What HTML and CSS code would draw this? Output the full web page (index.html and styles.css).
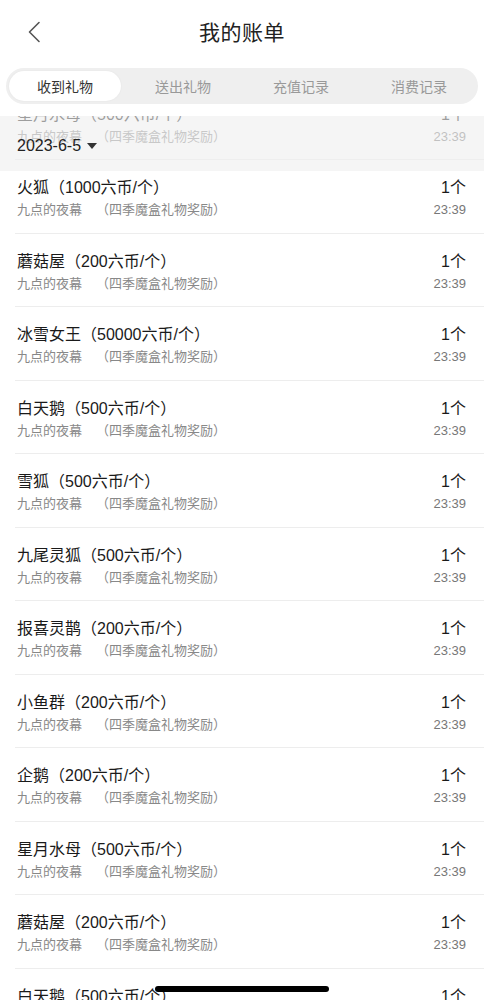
FILE: index.html
```html
<!DOCTYPE html>
<html>
<head lang="zh">
    <meta charset="UTF-8">
    <title>我的账单</title>
    <link rel="stylesheet" href="styles.css">
</head>
<body>

<div class="page">
    <div class="nav">
        <span class="back">
            <svg width="14" height="22" viewBox="0 0 14 22"><path d="M12 1.5 L2.5 11 L12 20.5" fill="none" stroke="#555" stroke-width="1.6" stroke-linecap="round" stroke-linejoin="round"/></svg>
        </span>
        <h1 class="title">我的账单</h1>
    </div>

    <ul class="tabs">
        <li class="current">收到礼物</li>
        <li>送出礼物</li>
        <li>充值记录</li>
        <li>消费记录</li>
    </ul>

    <div class="list-wrap">
        <!-- 吸顶的日期栏 -->
        <div class="date-bar">2023-6-5<i class="arrow"></i></div>

        <ul class="list">
            <li><div class="left"><p class="name">星月水母（500六币/个）</p><p class="from">九点的夜幕<span>（四季魔盒礼物奖励）</span></p></div><div class="right"><p class="count">1个</p><p class="time">23:39</p></div></li>
            <li><div class="left"><p class="name">火狐（1000六币/个）</p><p class="from">九点的夜幕<span>（四季魔盒礼物奖励）</span></p></div><div class="right"><p class="count">1个</p><p class="time">23:39</p></div></li>
            <li><div class="left"><p class="name">蘑菇屋（200六币/个）</p><p class="from">九点的夜幕<span>（四季魔盒礼物奖励）</span></p></div><div class="right"><p class="count">1个</p><p class="time">23:39</p></div></li>
            <li><div class="left"><p class="name">冰雪女王（50000六币/个）</p><p class="from">九点的夜幕<span>（四季魔盒礼物奖励）</span></p></div><div class="right"><p class="count">1个</p><p class="time">23:39</p></div></li>
            <li><div class="left"><p class="name">白天鹅（500六币/个）</p><p class="from">九点的夜幕<span>（四季魔盒礼物奖励）</span></p></div><div class="right"><p class="count">1个</p><p class="time">23:39</p></div></li>
            <li><div class="left"><p class="name">雪狐（500六币/个）</p><p class="from">九点的夜幕<span>（四季魔盒礼物奖励）</span></p></div><div class="right"><p class="count">1个</p><p class="time">23:39</p></div></li>
            <li><div class="left"><p class="name">九尾灵狐（500六币/个）</p><p class="from">九点的夜幕<span>（四季魔盒礼物奖励）</span></p></div><div class="right"><p class="count">1个</p><p class="time">23:39</p></div></li>
            <li><div class="left"><p class="name">报喜灵鹊（200六币/个）</p><p class="from">九点的夜幕<span>（四季魔盒礼物奖励）</span></p></div><div class="right"><p class="count">1个</p><p class="time">23:39</p></div></li>
            <li><div class="left"><p class="name">小鱼群（200六币/个）</p><p class="from">九点的夜幕<span>（四季魔盒礼物奖励）</span></p></div><div class="right"><p class="count">1个</p><p class="time">23:39</p></div></li>
            <li><div class="left"><p class="name">企鹅（200六币/个）</p><p class="from">九点的夜幕<span>（四季魔盒礼物奖励）</span></p></div><div class="right"><p class="count">1个</p><p class="time">23:39</p></div></li>
            <li><div class="left"><p class="name">星月水母（500六币/个）</p><p class="from">九点的夜幕<span>（四季魔盒礼物奖励）</span></p></div><div class="right"><p class="count">1个</p><p class="time">23:39</p></div></li>
            <li><div class="left"><p class="name">蘑菇屋（200六币/个）</p><p class="from">九点的夜幕<span>（四季魔盒礼物奖励）</span></p></div><div class="right"><p class="count">1个</p><p class="time">23:39</p></div></li>
            <li><div class="left"><p class="name">白天鹅（500六币/个）</p><p class="from">九点的夜幕<span>（四季魔盒礼物奖励）</span></p></div><div class="right"><p class="count">1个</p><p class="time">23:39</p></div></li>
        </ul>
    </div>

    <div class="home-bar"></div>
</div>

</body>
</html>
```

FILE: styles.css
```css
* {
    padding: 0;
    margin: 0;
    list-style: none;
    box-sizing: border-box;
}
html, body {
    background: #fff;
}
body {
    font-family: "Liberation Sans", "Noto Sans CJK SC", sans-serif;
    color: #1a1a1a;
}
.page {
    width: 484px;
    height: 1000px;
    overflow: hidden;
    display: flex;
    flex-direction: column;
}
.nav {
    height: 64px;
    display: flex;
    align-items: center;
    justify-content: center;
    position: relative;
    padding-bottom: 3px;
}
.back {
    position: absolute;
    left: 27px;
    top: 21px;
    width: 14px;
    height: 22px;
}
.back svg {
    display: block;
}
.title {
    font-size: 21px;
    font-weight: 400;
    color: #222;
    letter-spacing: 0.5px;
}
.tabs {
    margin: 4px 6px 0;
    height: 36px;
    border-radius: 18px;
    background: #efefef;
    display: flex;
    padding: 3px 0;
}
.tabs li {
    flex: 1;
    margin: 0 3px;
    display: flex;
    align-items: center;
    justify-content: center;
    font-size: 14px;
    color: #999;
    border-radius: 15px;
}
.tabs .current {
    background: #fff;
    color: #333;
    box-shadow: 0 0 2px rgba(0, 0, 0, 0.06);
}
.list-wrap {
    margin-top: 12px;
    flex: 1;
    overflow: hidden;
    position: relative;
}
.date-bar {
    position: absolute;
    top: 0;
    left: 0;
    right: 0;
    height: 55px;
    z-index: 2;
    background: rgba(239, 239, 239, 0.62);
    display: flex;
    align-items: center;
    padding: 4px 0 0 17px;
    font-size: 16px;
    color: #222;
}
.arrow {
    display: inline-block;
    margin-left: 6px;
    width: 0;
    height: 0;
    border-left: 5px solid transparent;
    border-right: 5px solid transparent;
    border-top: 6px solid #333;
}
.list {
    margin-top: -29.5px;
}
.list li {
    height: 73.5px;
    margin-left: 15px;
    padding: 4px 18px 0 2px;
    border-bottom: 1px solid #ededed;
    display: flex;
    justify-content: space-between;
    align-items: center;
}
.name, .count {
    font-size: 16px;
    line-height: 22px;
    color: #1a1a1a;
}
.from, .time {
    font-size: 13px;
    line-height: 19px;
    color: #888;
    margin-top: 1px;
}
.from span {
    margin-left: 14px;
}
.right {
    text-align: right;
}
.time {
    color: #777;
}
.home-bar {
    position: absolute;
    left: 155px;
    top: 986px;
    width: 174px;
    height: 6px;
    border-radius: 3px;
    background: #000;
}
```
